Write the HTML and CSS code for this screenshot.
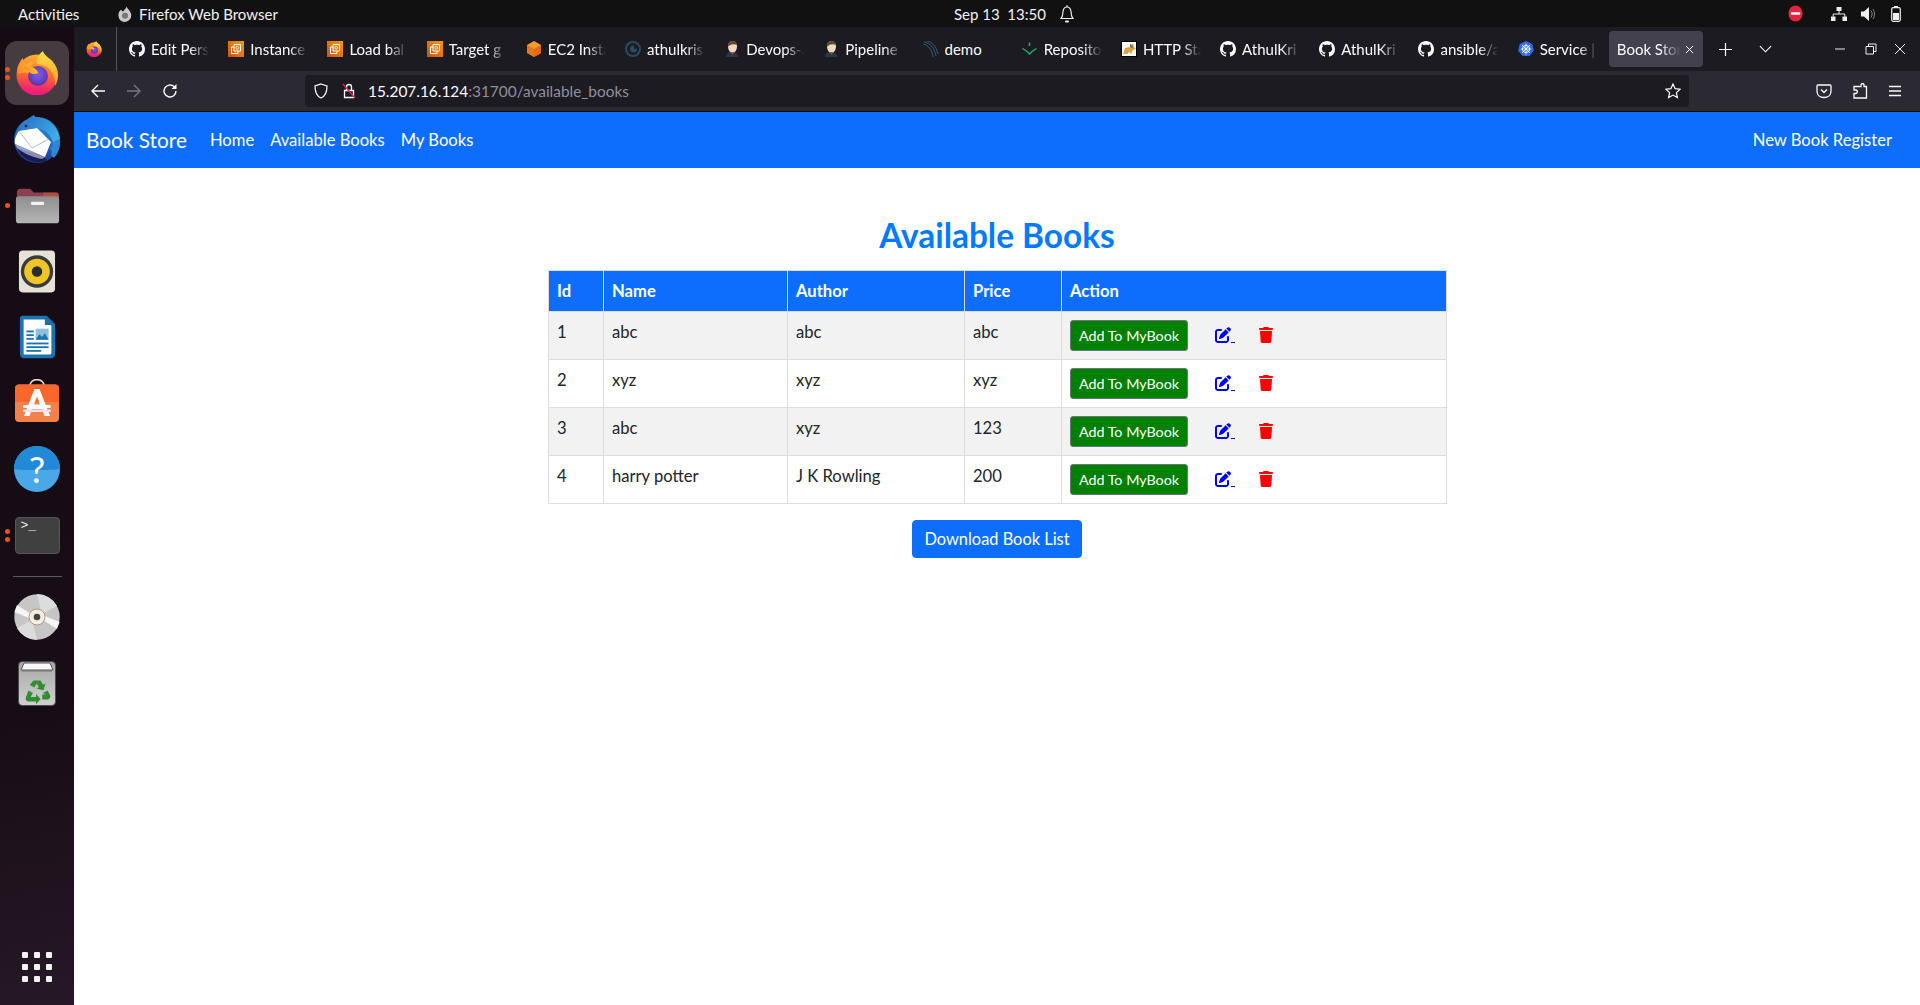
FILE: index.html
```html
<!DOCTYPE html>
<html lang="en">
<head>
<meta charset="utf-8">
<title>Book Store</title>
<link rel="stylesheet" href="styles.css">
</head>
<body>
<svg class="defs" aria-hidden="true">
  <defs>
    <linearGradient id="ffBody" x1="0.55" y1="0" x2="0.45" y2="1"><stop offset="0" stop-color="#ffb52e"/><stop offset="0.5" stop-color="#ff6a2b"/><stop offset="0.85" stop-color="#f5246e"/><stop offset="1" stop-color="#ea1a8a"/></linearGradient>
    <linearGradient id="ffTop" x1="0.5" y1="0" x2="0.5" y2="1"><stop offset="0" stop-color="#ffe24a"/><stop offset="1" stop-color="#ff9a28"/></linearGradient>
    <linearGradient id="ffArm" x1="0" y1="0" x2="1" y2="0"><stop offset="0" stop-color="#ff8a26"/><stop offset="1" stop-color="#ffc23a"/></linearGradient>
    <radialGradient id="ffCore" cx="0.5" cy="0.4" r="0.65"><stop offset="0" stop-color="#7b5fe8"/><stop offset="1" stop-color="#5c2ea8"/></radialGradient>
    <linearGradient id="tbBlue" x1="0.6" y1="0" x2="0.4" y2="1"><stop offset="0" stop-color="#2b93dd"/><stop offset="0.6" stop-color="#2560b8"/><stop offset="1" stop-color="#1c2f80"/></linearGradient>
    <linearGradient id="tbHead" x1="0" y1="0" x2="1" y2="0.6"><stop offset="0" stop-color="#2a6fc4"/><stop offset="1" stop-color="#3cace9"/></linearGradient>
    <linearGradient id="awsO" x1="0" y1="1" x2="1" y2="0"><stop offset="0" stop-color="#c8511b"/><stop offset="1" stop-color="#ff9900"/></linearGradient>
    <linearGradient id="grey" x1="0.5" y1="0" x2="0.5" y2="1"><stop offset="0" stop-color="#8e8e8e"/><stop offset="1" stop-color="#b5b5b5"/></linearGradient>
    <linearGradient id="trashG" x1="0.5" y1="0" x2="0.5" y2="1"><stop offset="0" stop-color="#a8a8a8"/><stop offset="1" stop-color="#d0d0d0"/></linearGradient>

    <symbol id="i-firefox" viewBox="0 0 42 44">
      <circle cx="21" cy="24" r="20.500" fill="url(#ffBody)"/>
      <path fill="url(#ffTop)" d="M21 13C20 8 23 3 27 0c1 4 5 6 9 10 4 4 6 9 6 14 0 4-1 8-3 11 1-7-3-16-8-19-3-2-7-3-10-3z"/>
      <path fill="url(#ffArm)" d="M1 21C1 15 4 10 7 7c0 3 1 5 3 6 3-2 6-2 8-1-2 1-4 3-4 5l6 3c-3 3-9 3-12 1-2 1-5 2-7 0z"/>
      <circle cx="22" cy="25" r="10" fill="url(#ffCore)"/>
      <path fill="url(#ffArm)" d="M8 17c3-2 7-2 10 0 2 1 4 3 4 5-3 2-7 1-9-1z"/>
    </symbol>
    <symbol id="i-thunderbird" viewBox="0 0 48 48">
      <circle cx="24" cy="25" r="23" fill="url(#tbBlue)"/>
      <path fill="#191a55" d="M4 34c4 7 12 13 22 13 4 0 6-1 8-2l-8-6z"/>
      <path fill="#fff" d="M6 16l18-3 14 14-6 15L2 29c-1-4 1-9 4-13z"/>
      <path fill="#d8d8e8" d="M2 29l30 13-3 2c-10-2-19-6-25-11z" opacity="0.6"/>
      <path fill="none" stroke="#a9a9b8" stroke-width="0.800" d="M6 16l13 17 17-9"/>
      <path fill="url(#tbHead)" d="M8 15C10 6 17 2 21 0c1 2 2 3 6 3 10 1 18 10 20 21l-7 4c-1-6-7-14-16-15z"/>
      <path fill="#2f86d4" d="M40 27l7-3c1 8-2 15-6 19l-3-3 1-4-2-2 2-3z"/>
      <circle cx="13" cy="11" r="1.300" fill="#102040"/>
    </symbol>
    <symbol id="i-files" viewBox="0 0 48 40">
      <path fill="#8c3f4c" d="M2 6c0-2 1-4 4-4h10l4 4h24c2 0 3 2 3 4v10H2z"/>
      <path fill="#c9563a" d="M30 6h14c2 0 3 2 3 4v6H30z" opacity="0.6"/>
      <path fill="url(#grey)" d="M1 13c0-2 1-3 3-3h40c2 0 3 1 3 3v23c0 2-1 3-3 3H4c-2 0-3-1-3-3z"/>
      <rect x="17" y="16" width="14" height="3.500" rx="1.200" fill="#f2f2f2"/>
    </symbol>
    <symbol id="i-rhythmbox" viewBox="0 0 40 46">
      <rect x="1" y="1" width="38" height="44" rx="4" fill="#e6e2d6"/>
      <circle cx="20" cy="23" r="17" fill="#3a3a38"/>
      <circle cx="20" cy="23" r="13.500" fill="#f0c52a"/>
      <circle cx="20" cy="23" r="5.500" fill="#2b2b28"/>
    </symbol>
    <symbol id="i-writer" viewBox="0 0 40 48">
      <path fill="#1b74b0" d="M4 1h26l9 9v33c0 2-2 4-4 4H5c-2 0-4-2-4-4V4c0-2 1-3 3-3z"/>
      <path fill="#fff" d="M5 5h23l7 7v29c0 1-1 2-2 2H6c-1 0-1-1-1-2z"/>
      <path fill="#1e6fa6" d="M28 1l11 10H28z"/>
      <rect x="8" y="17" width="8" height="2" fill="#1b74b0"/><rect x="8" y="21" width="8" height="2" fill="#1b74b0"/><rect x="8" y="25" width="8" height="2" fill="#1b74b0"/>
      <rect x="8" y="30" width="24" height="2" fill="#1b74b0"/><rect x="8" y="34" width="24" height="2" fill="#1b74b0"/><rect x="8" y="38" width="16" height="2" fill="#1b74b0"/>
      <rect x="18" y="15" width="14" height="12" fill="#8cc0e0"/><path fill="#1b74b0" d="M18 27l4-6 3 3 3-4 4 7z"/>
    </symbol>
    <symbol id="i-store" viewBox="0 0 44 43">
      <path fill="none" stroke="#f2dcb4" stroke-width="1.600" d="M15 7C15-1.500 29-1.500 29 7"/>
      <rect y="5.500" width="44" height="37.500" rx="4" fill="#f0814a"/>
      <path fill="#f8672c" d="M0 9.500C0 7 2 5.500 4 5.500h36c2 0 4 1.500 4 4V23H0z"/>
      <path fill="#fff" d="M19.500 10h5L35 37h-5.500L27 30H17l-2.500 7H9zM22 17.500L19 25.500h6z"/>
      <rect x="8" y="26" width="28" height="3" rx="1.500" fill="#fff"/>
      <rect x="8" y="30.500" width="28" height="2.500" rx="1.200" fill="#fde"/>
    </symbol>
    <symbol id="i-help" viewBox="0 0 46 46">
      <circle cx="23" cy="23" r="23" fill="#4aa8e6"/>
      <path fill="#2288d8" d="M0 23a23 23 0 0 1 46 0c-8 1.500-38 1.500-46 0z"/>
    </symbol>
    <symbol id="i-dvd" viewBox="0 0 46 46">
      <circle cx="23" cy="23" r="22.700" fill="#c6c6c6"/>
      <path fill="#dcdcdc" d="M23 0a23 23 0 0 1 20 12L28 20zM23 46A23 23 0 0 1 3 34l15-8z"/>
      <path fill="#f6f6f6" d="M3 11L17 20 15 24 .4 18zM43 35L29 26 31 22 45.600 28z"/>
      <circle cx="23" cy="23" r="8" fill="#f2eee2" stroke="#a08a68" stroke-width="0.800"/>
      <circle cx="23" cy="23" r="3.300" fill="#444"/>
    </symbol>
    <symbol id="i-trash" viewBox="0 0 38 45">
      <rect x="0.500" y="0.500" width="37" height="44" rx="4" fill="url(#trashG)" stroke="#444" stroke-width="0.800"/>
      <path fill="#f7f7f7" stroke="#555" stroke-width="1" d="M3 9l3-7h26l3 7z"/>
      <rect x="4" y="9" width="30" height="1.500" fill="#777"/>
      <g fill="#2f8f2f">
        <path d="M15.500 19.500h7l2.500 4.300 2.500-1.500-2 7-7-1.800 2.300-1.400-2.100-3.600-2.400 4-4.500-2.600z"/>
        <path d="M10.500 29.500l4.400 2.600 0 0-2.200 3.800h5.300v-2.800l4.700 5-4.700 5.200v-2.800h-7.500c-2.500 0-3.500-3-2.300-5z"/>
        <path d="M25 32l4.500-2.500 2.300 4c1.200 2.200 0 5-2.500 5h-5v-5h3.500z"/>
      </g>
    </symbol>
    <symbol id="i-github" viewBox="0 0 16 16">
      <path fill="#fbfbfe" d="M8 0C3.580 0 0 3.580 0 8c0 3.540 2.290 6.530 5.470 7.590.4.070.55-.17.55-.38 0-.19-.01-.82-.01-1.490-2.010.37-2.530-.49-2.690-.94-.09-.23-.48-.94-.82-1.130-.28-.15-.68-.52-.01-.53.63-.01 1.080.58 1.230.82.72 1.210 1.870.87 2.330.66.07-.52.28-.87.51-1.070-1.780-.2-3.640-.89-3.640-3.950 0-.87.31-1.590.82-2.150-.08-.2-.36-1.020.08-2.120 0 0 .67-.21 2.200.82.64-.18 1.320-.27 2-.27.68 0 1.360.09 2 .27 1.530-1.040 2.200-.82 2.200-.82.44 1.100.16 1.920.08 2.120.51.56.82 1.270.82 2.150 0 3.070-1.870 3.750-3.650 3.950.29.25.54.73.54 1.480 0 1.070-.01 1.930-.01 2.200 0 .21.15.46.55.38A8.013 8.013 0 0016 8c0-4.420-3.580-8-8-8z"/>
    </symbol>
    <symbol id="i-aws" viewBox="0 0 16 16">
      <rect width="16" height="16" fill="url(#awsO)"/>
      <path fill="none" stroke="#fff" stroke-width="1" d="M6 3.500h6.500V10H6zM3.500 6H6M3.500 6v6.500H10V10"/>
      <circle cx="9.200" cy="6.800" r="1.400" fill="none" stroke="#fff" stroke-width="0.800"/>
    </symbol>
    <symbol id="i-ec2" viewBox="0 0 16 16">
      <path fill="#ff9a2e" d="M8 0l7 4v8l-7 4-7-4V4z"/>
      <path fill="#e26a1a" d="M8 8l7-4v8l-7 4z"/>
      <path fill="#c2541a" d="M1 4l7 4v8l-7-4z" opacity="0.500"/>
    </symbol>
    <symbol id="i-argo" viewBox="0 0 16 16">
      <circle cx="8" cy="8" r="7" fill="none" stroke="#2b4a63" stroke-width="2"/>
      <circle cx="8.500" cy="8" r="3.500" fill="#2b4a63"/>
      <path fill="#1c1b22" d="M9 4l6 3-6 1z"/>
    </symbol>
    <symbol id="i-jenkins" viewBox="0 0 16 16">
      <path fill="#27384a" d="M2 16c0-3 2-5 6-5s6 2 6 5z"/>
      <path fill="#f1d9c0" d="M4 5c0-3 2-5 4.500-5S13 2 13 5c0 4-2 7-4.500 7S4 9 4 5z"/>
      <path fill="#5a4636" d="M4 5c0-3 2-5 4.500-5S13 2 13 4c-2-1-5-1-7 0-1 1-1 2-2 1z"/>
      <path fill="#c63a32" d="M7 11h3l-1.500 3z"/>
    </symbol>
    <symbol id="i-aurora" viewBox="0 0 16 16">
      <g fill="none" stroke="#35607f" stroke-width="0.900"><path d="M1 1c6 1 10 5 12 14"/><path d="M4 0c5 1 9 5 11 13"/><path d="M0 3c5 1 9 5 10 13"/></g>
    </symbol>
    <symbol id="i-repo" viewBox="0 0 16 16">
      <g fill="none" stroke="#1fae6a" stroke-width="1.500"><path d="M7.500 1.500v3.500"/><path d="M.5 7.500L5 10.500 7.500 13 10 10.500 14.500 7.500"/></g>
    </symbol>
    <symbol id="i-tomcat" viewBox="0 0 16 16">
      <rect x="0.500" y="0.500" width="15" height="15" fill="#fff" stroke="#000"/>
      <path fill="#d9a441" d="M2 13l2-6 5-1 3-4 1 4 2 2-3 1-2 4-2-2-2 2z"/>
      <path fill="#6b6b6b" d="M9 3l2 1 1 3-3-1z"/>
    </symbol>
    <symbol id="i-k8s" viewBox="0 0 16 16">
      <path fill="#326ce5" d="M8 0l6.300 3 1.500 6.800L11.500 15h-7L.2 9.800 1.700 3z"/>
      <circle cx="8" cy="8" r="3.600" fill="none" stroke="#fff" stroke-width="1"/>
      <path stroke="#fff" stroke-width="0.800" d="M8 2.500v11M2.800 8h10.400M4.200 4.200l7.600 7.600M11.800 4.200l-7.600 7.600"/>
    </symbol>
    <path id="i-edit" d="M471.600 21.700c-21.900-21.900-57.300-21.900-79.200 0L362.300 51.700l97.900 97.900 30.100-30.100c21.900-21.900 21.900-57.300 0-79.200L471.600 21.700zm-299.200 220c-6.100 6.100-10.800 13.600-13.500 21.900l-29.600 88.800c-2.900 8.600-.6 18.100 5.800 24.600s15.900 8.700 24.600 5.800l88.800-29.600c8.200-2.700 15.700-7.400 21.900-13.500L437.700 172.300 339.700 74.300 172.400 241.700zM96 64C43 64 0 107 0 160V416c0 53 43 96 96 96H352c53 0 96-43 96-96V320c0-17.700-14.300-32-32-32s-32 14.300-32 32v96c0 17.700-14.300 32-32 32H96c-17.700 0-32-14.300-32-32V160c0-17.700 14.300-32 32-32h96c17.700 0 32-14.300 32-32s-14.300-32-32-32H96z"/>
    <path id="i-del" d="M135.200 17.700L128 32H32C14.300 32 0 46.300 0 64S14.300 96 32 96H416c17.700 0 32-14.300 32-32s-14.300-32-32-32H320l-7.200-14.300C307.400 6.800 296.300 0 284.200 0H163.800c-12.100 0-23.200 6.800-28.600 17.700zM416 128H32L53.200 467c1.600 25.300 22.600 45 47.900 45H346.900c25.300 0 46.300-19.700 47.900-45L416 128z"/>
  </defs>
</svg>

<header class="topbar">
  <span class="activities">Activities</span>
  <svg class="top-ff" viewBox="0 0 16 18"><path fill="#c9c9c9" d="M10 0c0 3 4 4 5 9 1 5-3 9-7.500 9S0 14 .5 9C1 6 3 4 4 4c0 1 1 2 2 2 1-2 3-3 4-6z"/><circle cx="8" cy="11" r="3.500" fill="#777"/></svg>
  <span class="app-name">Firefox Web Browser</span>
  <span class="clock">Sep 13&nbsp; 13:50</span>
  <svg class="bell" viewBox="0 0 14 18"><path fill="none" stroke="#eee" stroke-width="1.200" d="M1 13.500c2-2 1.500-4 2-7C3.500 3 5 2 7 2s3.500 1 4 4.500c.5 3 0 5 2 7z"/><path fill="none" stroke="#eee" d="M7 0v2"/><rect x="5" y="15.500" width="4" height="2" rx="1" fill="#eee"/></svg>
  <svg class="dnd" viewBox="0 0 16 18"><ellipse cx="8" cy="9" rx="7.500" ry="8.500" fill="#e3243f"/><rect x="3" y="7.700" width="10" height="2.600" fill="#fff"/></svg>
  <svg class="net" viewBox="0 0 16 14"><g fill="#eee"><rect x="5.500" width="5" height="4"/><rect y="9.500" width="4.500" height="4.500"/><rect x="11.500" y="9.500" width="4.500" height="4.500"/></g><path fill="none" stroke="#eee" d="M8 4v3M2.200 9.500V7h11.600v2.500"/></svg>
  <svg class="vol" viewBox="0 0 14 14"><path fill="#eee" d="M0 4.500h3L8 0v14l-5-4.500H0z"/><path fill="none" stroke="#888" d="M10 3.500c1.500 2 1.500 5 0 7M12 2c2 3 2 7 0 10"/></svg>
  <svg class="bat" viewBox="0 0 10 16"><rect x="3" width="4" height="2" fill="#eee"/><rect x=".7" y="1.700" width="8.600" height="13.600" rx="1.500" fill="none" stroke="#eee" stroke-width="1.200"/><rect x="2" y="7" width="6" height="7" fill="#eee"/></svg>
</header>

<div class="desktop">
  <aside class="dock">
    <div class="dock-item active"><span class="pips"><i></i><i></i></span><svg class="ic-firefox"><use href="#i-firefox"/></svg></div>
    <div class="dock-item"><svg class="ic-tb"><use href="#i-thunderbird"/></svg></div>
    <div class="dock-item"><span class="pips"><i></i></span><svg class="ic-files"><use href="#i-files"/></svg></div>
    <div class="dock-item"><svg class="ic-rb"><use href="#i-rhythmbox"/></svg></div>
    <div class="dock-item"><svg class="ic-wr"><use href="#i-writer"/></svg></div>
    <div class="dock-item"><svg class="ic-store"><use href="#i-store"/></svg></div>
    <div class="dock-item"><div class="help"><svg class="ic-help"><use href="#i-help"/></svg><span class="help-q">?</span></div></div>
    <div class="dock-item"><span class="pips"><i></i><i></i></span><div class="terminal">&gt;_</div></div>
    <hr class="dock-sep">
    <div class="dock-item"><svg class="ic-dvd"><use href="#i-dvd"/></svg></div>
    <div class="dock-item"><svg class="ic-trash"><use href="#i-trash"/></svg></div>
    <div class="dock-grid"><i></i><i></i><i></i><i></i><i></i><i></i><i></i><i></i><i></i></div>
  </aside>

  <div class="browser">
    <div class="tabstrip">
      <div class="ff-btn"><svg class="fav"><use href="#i-firefox"/></svg></div>
      <div class="tabs">
        <div class="tab"><svg class="fav"><use href="#i-github"/></svg><span class="label">Edit Pers</span></div>
        <div class="tab"><svg class="fav"><use href="#i-aws"/></svg><span class="label">Instance</span></div>
        <div class="tab"><svg class="fav"><use href="#i-aws"/></svg><span class="label">Load bal</span></div>
        <div class="tab"><svg class="fav"><use href="#i-aws"/></svg><span class="label">Target g</span></div>
        <div class="tab"><svg class="fav"><use href="#i-ec2"/></svg><span class="label">EC2 Insta</span></div>
        <div class="tab"><svg class="fav"><use href="#i-argo"/></svg><span class="label">athulkris</span></div>
        <div class="tab"><svg class="fav"><use href="#i-jenkins"/></svg><span class="label">Devops-a</span></div>
        <div class="tab"><svg class="fav"><use href="#i-jenkins"/></svg><span class="label">Pipeline</span></div>
        <div class="tab"><svg class="fav"><use href="#i-aurora"/></svg><span class="label nofade">demo</span></div>
        <div class="tab"><svg class="fav"><use href="#i-repo"/></svg><span class="label">Reposito</span></div>
        <div class="tab"><svg class="fav"><use href="#i-tomcat"/></svg><span class="label">HTTP Sta</span></div>
        <div class="tab"><svg class="fav"><use href="#i-github"/></svg><span class="label">AthulKri</span></div>
        <div class="tab"><svg class="fav"><use href="#i-github"/></svg><span class="label">AthulKri</span></div>
        <div class="tab"><svg class="fav"><use href="#i-github"/></svg><span class="label">ansible/a</span></div>
        <div class="tab"><svg class="fav"><use href="#i-k8s"/></svg><span class="label">Service |</span></div>
        <div class="tab current"><span class="label">Book Stor</span><svg class="tab-x" viewBox="0 0 10 10"><path d="M1 1l8 8M9 1l-8 8"/></svg></div>
      </div>
      <svg class="plus" viewBox="0 0 14 14"><path d="M7 0v14M0 7h14"/></svg>
      <svg class="chev" viewBox="0 0 14 8"><path d="M1 1l6 6 6-6"/></svg>
      <svg class="win win-min" viewBox="0 0 12 12"><path d="M1 6h10"/></svg>
      <svg class="win win-max" viewBox="0 0 12 12"><path d="M1 3.500h7.500V11H1zM3.500 3.500V1H11v7.500H8.500"/></svg>
      <svg class="win win-close" viewBox="0 0 12 12"><path d="M1 1l10 10M11 1L1 11"/></svg>
    </div>

    <div class="toolbar">
      <svg class="nav-ic back" viewBox="0 0 16 16"><path d="M15 8H2M8 2L2 8l6 6"/></svg>
      <svg class="nav-ic fwd" viewBox="0 0 16 16"><path d="M1 8h13M8 2l6 6-6 6"/></svg>
      <svg class="nav-ic reload" viewBox="0 0 16 16"><path d="M14 8a6 6 0 1 1-2-4.500L14 5"/><path class="solid" d="M14.500 1v5h-5z"/></svg>
      <div class="urlbar">
        <svg class="shield" viewBox="0 0 14 16"><path d="M7 1l6 2c0 6-1 10-6 12C2 13 1 9 1 3z"/></svg>
        <svg class="lock" viewBox="0 0 14 16"><path d="M2.500 7.500h9v7h-9zM4.500 7.500V4a2.500 2.500 0 0 1 5 0v3.500" fill="none" stroke="#fbfbfe" stroke-width="1.300"/><path d="M1 1l12 14" stroke="#e22850" stroke-width="1.300"/></svg>
        <span class="url"><b>15.207.16.124</b>:31700/available_books</span>
        <svg class="star" viewBox="0 0 16 16"><path d="M8 1l2.100 4.600 5 .6-3.700 3.400 1 5L8 12.100 3.600 14.600l1-5L.9 6.200l5-.6z"/></svg>
      </div>
      <svg class="tool-ic pocket" viewBox="0 0 16 16"><path d="M2 2h12c.6 0 1 .4 1 1v5c0 4-3 6.500-7 6.500S1 12 1 8V3c0-.6.4-1 1-1z"/><path d="M5 6.500l3 3 3-3"/></svg>
      <svg class="tool-ic ext" viewBox="0 0 16 16"><path d="M6 3h3V1.500a1.500 1.500 0 0 1 3 0V3h2.500v11.500H2V10h2a1.800 1.800 0 0 0 0-3.500H2V3h4z" transform="translate(0 .5)"/></svg>
      <svg class="tool-ic burger" viewBox="0 0 14 12"><path d="M1 1.500h12M1 6h12M1 10.500h12"/></svg>
    </div>

    <main class="page">
      <nav class="navbar">
        <a class="brand">Book Store</a>
        <a class="nav-link">Home</a>
        <a class="nav-link">Available Books</a>
        <a class="nav-link">My Books</a>
        <a class="nav-link nav-right">New Book Register</a>
      </nav>
      <section class="content">
        <h2 class="title">Available Books</h2>
        <table class="books">
          <colgroup><col class="c-id"><col class="c-name"><col class="c-author"><col class="c-price"><col class="c-action"></colgroup>
          <thead><tr><th>Id</th><th>Name</th><th>Author</th><th>Price</th><th>Action</th></tr></thead>
          <tbody>
            <tr><td>1</td><td>abc</td><td>abc</td><td>abc</td><td><div class="actions"><button class="add">Add To MyBook</button><a class="edit"><svg viewBox="0 0 512 512"><use href="#i-edit"/></svg><span class="space"></span></a><a class="del"><svg viewBox="0 0 448 512"><use href="#i-del"/></svg></a></div></td></tr>
            <tr><td>2</td><td>xyz</td><td>xyz</td><td>xyz</td><td><div class="actions"><button class="add">Add To MyBook</button><a class="edit"><svg viewBox="0 0 512 512"><use href="#i-edit"/></svg><span class="space"></span></a><a class="del"><svg viewBox="0 0 448 512"><use href="#i-del"/></svg></a></div></td></tr>
            <tr><td>3</td><td>abc</td><td>xyz</td><td>123</td><td><div class="actions"><button class="add">Add To MyBook</button><a class="edit"><svg viewBox="0 0 512 512"><use href="#i-edit"/></svg><span class="space"></span></a><a class="del"><svg viewBox="0 0 448 512"><use href="#i-del"/></svg></a></div></td></tr>
            <tr><td>4</td><td>harry potter</td><td>J K Rowling</td><td>200</td><td><div class="actions"><button class="add">Add To MyBook</button><a class="edit"><svg viewBox="0 0 512 512"><use href="#i-edit"/></svg><span class="space"></span></a><a class="del"><svg viewBox="0 0 448 512"><use href="#i-del"/></svg></a></div></td></tr>
          </tbody>
        </table>
        <button class="download">Download Book List</button>
      </section>
    </main>
  </div>
</div>
</body>
</html>
```
FILE: styles.css
```css
* { box-sizing: border-box; }
html, body { margin: 0; height: 100%; }
body {
  width: 1920px;
  height: 1005px;
  overflow: hidden;
  display: flex;
  flex-direction: column;
  font-family: "Lato", "Noto Sans", sans-serif;
  background: #fff;
}
.defs { position: absolute; width: 0; height: 0; }

/* GNOME top bar */
.topbar {
  height: 27px;
  flex: none;
  display: flex;
  align-items: center;
  background: #111;
  color: #f2f2f2;
  font-size: 15px;
}
.activities { margin-left: 18px; width: 100px; }
.top-ff { width: 14px; height: 16px; flex: none; }
.app-name { margin-left: 7px; width: 815px; }
.clock { width: 106px; }
.bell { width: 14px; height: 18px; flex: none; }
.dnd { margin-left: 714px; width: 15px; height: 17px; flex: none; }
.net { margin-left: 28px; width: 16px; height: 14px; flex: none; }
.vol { margin-left: 14px; width: 14px; height: 14px; flex: none; }
.bat { margin-left: 16px; width: 10px; height: 16px; flex: none; }

.desktop { flex: 1; display: flex; min-height: 0; }

/* Dock */
.dock {
  width: 74px;
  flex: none;
  display: flex;
  flex-direction: column;
  align-items: center;
  padding: 14px 0 0;
  background: linear-gradient(170deg, #150b14 0%, #170d16 70%, #261826 100%);
}
.dock-item {
  position: relative;
  width: 64px;
  height: 64px;
  margin-bottom: 2px;
  border-radius: 12px;
  display: flex;
  align-items: center;
  justify-content: center;
  flex: none;
}
.dock-item.active { background: #453c41; }
.pips {
  position: absolute;
  left: 0;
  top: 0;
  bottom: 0;
  display: flex;
  flex-direction: column;
  justify-content: center;
  gap: 3px;
}
.pips i { width: 5px; height: 5px; border-radius: 50%; background: #e95420; }
.ic-firefox { width: 42px; height: 44px; }
.ic-tb { width: 48px; height: 48px; }
.ic-files { width: 45px; height: 41px; }
.ic-rb { width: 38px; height: 45px; }
.ic-wr { width: 37px; height: 46px; }
.ic-store { width: 44px; height: 43px; margin-bottom: 6px; }
.help { position: relative; width: 46px; height: 46px; }
.ic-help { width: 46px; height: 46px; display: block; }
.help-q {
  position: absolute;
  left: 0; right: 0; top: 0;
  text-align: center;
  color: #fff;
  font: 36px/46px "Lato", sans-serif;
}
.terminal {
  width: 45px;
  height: 37px;
  border-radius: 4px;
  background: #404040;
  border: 1px solid #555;
  color: #eee;
  font: 13px/14px "Liberation Mono", monospace;
  padding: 1px 5px;
}
.dock-sep { width: 49px; margin: 7px 0 8px; border: 0; border-top: 1px solid #5d5760; flex: none; }
.ic-dvd { width: 46px; height: 46px; }
.ic-trash { width: 38px; height: 45px; }
.dock-grid {
  margin-top: auto;
  margin-bottom: 23px;
  display: grid;
  grid-template-columns: repeat(3, 6px);
  grid-auto-rows: 6px;
  gap: 6px;
  justify-content: center;
}
.dock-grid i { background: #f2f2f2; border-radius: 1px; }

/* Browser chrome */
.browser { flex: 1; min-width: 0; display: flex; flex-direction: column; }
.tabstrip {
  height: 44px;
  flex: none;
  display: flex;
  align-items: center;
  background: #1c1b22;
  color: #fbfbfe;
  font-size: 15px;
}
.ff-btn {
  width: 43px;
  height: 44px;
  padding-left: 12px;
  display: flex;
  align-items: center;
  border-right: 1px solid #55545c;
  flex: none;
}
.tabs { display: grid; grid-template-columns: repeat(15, 99.200px) 95px; width: 1583px; margin-left: 3px; flex: none; }
.tab { height: 36px; display: flex; align-items: center; padding-left: 9px; gap: 6px; min-width: 0; }
.fav { width: 16px; height: 16px; flex: none; }
.label {
  width: 60px;
  white-space: nowrap;
  overflow: hidden;
  -webkit-mask-image: linear-gradient(to right, #000 65%, transparent 97%);
  mask-image: linear-gradient(to right, #000 65%, transparent 97%);
}
.label.nofade { -webkit-mask-image: none; mask-image: none; }
.tab.current { background: #42414d; border-radius: 4px; padding-left: 8px; gap: 0; margin-left: 1px; }
.tab.current .label { width: 66px; }
.tab-x { width: 9px; height: 9px; margin-left: 2px; fill: none; stroke: #fbfbfe; stroke-width: 1.100; flex: none; }
.plus { width: 13px; height: 13px; margin-left: 16px; fill: none; stroke: #fbfbfe; stroke-width: 1.300; flex: none; }
.chev { width: 13px; height: 8px; margin-left: 27px; fill: none; stroke: #fbfbfe; stroke-width: 1.200; flex: none; }
.win { width: 12px; height: 12px; fill: none; stroke: #eee; stroke-width: 1; flex: none; }
.win-min { margin-left: 62px; }
.win-max { margin-left: 19px; }
.win-close { margin-left: 17px; }

.toolbar {
  height: 41px;
  flex: none;
  display: flex;
  align-items: center;
  background: #2b2a33;
  border-bottom: 1px solid #0c0c0d;
}
.nav-ic { width: 16px; height: 16px; fill: none; stroke: #fbfbfe; stroke-width: 1.400; flex: none; }
.nav-ic .solid { fill: #fbfbfe; stroke: none; }
.back { margin-left: 16px; }
.fwd { margin-left: 20px; stroke: #77767c; }
.reload { margin-left: 20px; }
.urlbar {
  width: 1384px;
  height: 32px;
  margin-left: 127px;
  background: #1c1b22;
  border-radius: 4px;
  display: flex;
  align-items: center;
  color: #fbfbfe;
  font-size: 15.400px;
}
.shield { width: 14px; height: 16px; margin-left: 9px; fill: none; stroke: #fbfbfe; stroke-width: 1.200; flex: none; }
.lock { width: 14px; height: 16px; margin-left: 14px; flex: none; }
.url { margin-left: 12px; flex: 1; color: #8f8f9d; }
.url b { font-weight: 400; color: #fbfbfe; }
.star { width: 16px; height: 16px; margin-right: 8px; fill: none; stroke: #fbfbfe; stroke-width: 1.200; flex: none; }
.tool-ic { width: 16px; height: 16px; fill: none; stroke: #fbfbfe; stroke-width: 1.300; flex: none; }
.pocket { margin-left: 127px; }
.ext { margin-left: 20px; }
.burger { margin-left: 20px; width: 14px; height: 12px; }

/* Page */
.page { flex: 1; background: #fff; color: #212529; font-size: 16.600px; min-height: 0; }
.navbar {
  height: 56px;
  display: flex;
  align-items: center;
  gap: 16px;
  padding: 0 28px 0 12px;
  background: #0d6efd;
}
.navbar a { color: #fff; white-space: nowrap; }
.brand { font-size: 20.800px; margin: 0 7px 2px 0; }
.nav-link { color: rgba(255,255,255,.9); }
.nav-right { margin-left: auto; }
.content { display: flex; flex-direction: column; align-items: center; padding-top: 48px; }
.title { margin: 0 0 16px; font-size: 33.400px; line-height: 38px; font-weight: 700; color: #007bff; }
.books { width: 899px; table-layout: fixed; border-collapse: collapse; border: 1px solid #ddd; }
.c-id { width: 55px; }
.c-name { width: 184px; }
.c-author { width: 177px; }
.c-price { width: 97px; }
.books th {
  height: 41px;
  padding: 0 8.500px 1px;
  text-align: left;
  font-weight: 700;
  color: #fff;
  background: #0d6efd;
  border: 1px solid #ddd;
}
.books thead th + th { border-left-color: #fff; }
.books td {
  height: 48px;
  padding: 8px 8.500px 0;
  border: 1px solid #ddd;
  vertical-align: top;
  line-height: 24px;
}
.books tbody tr:nth-child(odd) { background: #f2f2f2; }
.actions { display: flex; align-items: center; height: 31px; }
.add {
  width: 118px;
  height: 31px;
  padding: 0;
  background: #008000;
  color: #fff;
  border: 1px solid #6c757d;
  border-radius: 3px;
  font: 14.300px "Lato", "Noto Sans", sans-serif;
}
.edit { display: flex; align-items: flex-end; margin: 0 0 2px 27px; color: #00f; }
.edit svg { width: 16px; height: 16px; fill: currentColor; }
.space { width: 4px; height: 1px; background: #00f; }
.del { margin: 0 0 2px 24px; display: flex; }
.del svg { width: 14px; height: 16px; fill: #f00; }
.download {
  width: 170px;
  height: 38px;
  margin-top: 16px;
  padding: 0 0 1px;
  background: #0d6efd;
  color: #fff;
  border: 1px solid #0d6efd;
  border-radius: 4px;
  font: 16.400px "Lato", "Noto Sans", sans-serif;
}
```
